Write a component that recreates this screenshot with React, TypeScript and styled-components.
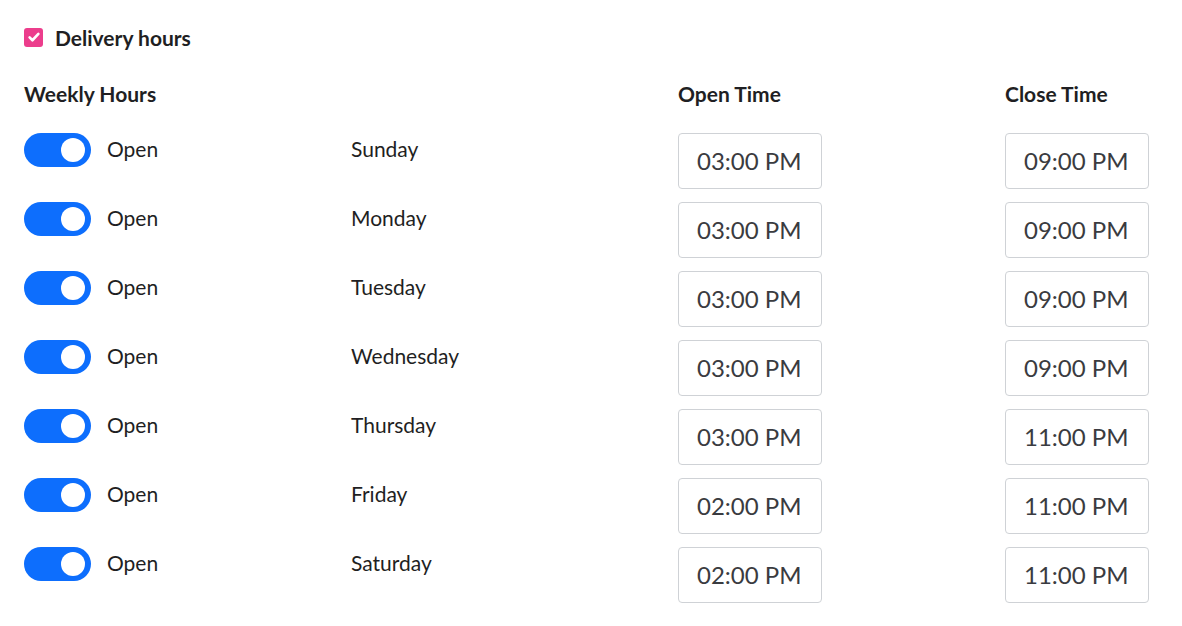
import styled, { createGlobalStyle } from 'styled-components';

const GlobalStyle = createGlobalStyle`
  body {
    margin: 0;
    background: #ffffff;
    font-family: Lato, "Liberation Sans", sans-serif;
    color: #1f1f23;
  }
`;

const Page = styled.div`
  padding: 24px 24px 20px;
`;

const CheckRow = styled.label`
  display: flex;
  align-items: center;
  gap: 12px;
  font-size: 21px;
  font-weight: 700;
  height: 26px;
`;

const CheckBox = styled.span`
  width: 19px;
  height: 19px;
  border-radius: 3px;
  background: #ec3d8c;
  display: flex;
  align-items: center;
  justify-content: center;
`;

const Table = styled.div`
  display: grid;
  grid-template-columns: 327px 327px 327px 1fr;
  margin-top: 32px;
  row-gap: 13px;
  align-items: start;
`;

const HeadCell = styled.div`
  font-size: 21px;
  font-weight: 700;
  line-height: 24px;
  margin-bottom: 14px;
`;

const Cell = styled.div`
  display: flex;
  align-items: center;
  gap: 16px;
  height: 34px;
  font-size: 21px;
`;

const Label = styled.span`
  margin-bottom: 4px;
`;

const Toggle = styled.span<{ $on: boolean }>`
  position: relative;
  width: 67px;
  height: 34px;
  border-radius: 17px;
  background: ${(p) => (p.$on ? '#0d6efd' : '#c8c8c8')};
  &::after {
    content: '';
    position: absolute;
    top: 5px;
    left: ${(p) => (p.$on ? '37px' : '5px')};
    width: 24px;
    height: 24px;
    border-radius: 50%;
    background: #fff;
  }
`;

const TimeBox = styled.div`
  width: 144px;
  height: 56px;
  box-sizing: border-box;
  border: 1px solid #cfd2d6;
  border-radius: 4px;
  display: flex;
  align-items: center;
  padding: 0 0 2px 18px;
  font-size: 24px;
  color: #3a3b40;
`;

const days = [
  { day: 'Sunday', open: '03:00 PM', close: '09:00 PM' },
  { day: 'Monday', open: '03:00 PM', close: '09:00 PM' },
  { day: 'Tuesday', open: '03:00 PM', close: '09:00 PM' },
  { day: 'Wednesday', open: '03:00 PM', close: '09:00 PM' },
  { day: 'Thursday', open: '03:00 PM', close: '11:00 PM' },
  { day: 'Friday', open: '02:00 PM', close: '11:00 PM' },
  { day: 'Saturday', open: '02:00 PM', close: '11:00 PM' },
];

export default function App() {
  return (
    <Page>
      <GlobalStyle />
      <CheckRow>
        <CheckBox>
          <svg width="14" height="14" viewBox="0 0 16 16" fill="none">
            <path d="M3 8.5l3.2 3.2L13 4.5" stroke="#fff" strokeWidth="3" strokeLinecap="round" strokeLinejoin="round" />
          </svg>
        </CheckBox>
        Delivery hours
      </CheckRow>
      <Table>
        <HeadCell>Weekly Hours</HeadCell>
        <HeadCell />
        <HeadCell>Open Time</HeadCell>
        <HeadCell>Close Time</HeadCell>
        {days.map((d) => (
          <>
            <Cell key={d.day + 'a'}>
              <Toggle $on />
              <Label>Open</Label>
            </Cell>
            <Cell key={d.day + 'b'}>
              <Label>{d.day}</Label>
            </Cell>
            <TimeBox key={d.day + 'c'}>{d.open}</TimeBox>
            <TimeBox key={d.day + 'd'}>{d.close}</TimeBox>
          </>
        ))}
      </Table>
    </Page>
  );
}
